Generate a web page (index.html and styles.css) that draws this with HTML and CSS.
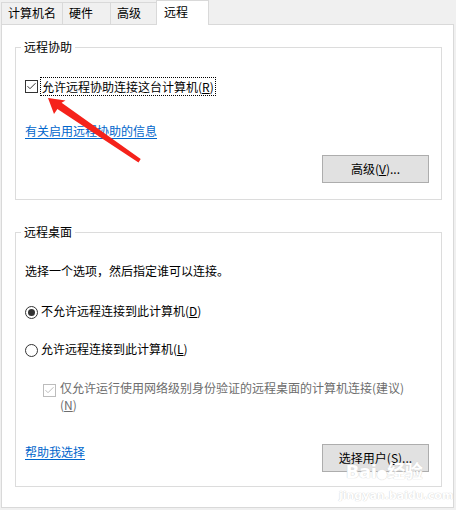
FILE: index.html
```html
<!DOCTYPE html>
<html lang="zh-CN">
<head>
<meta charset="utf-8">
<title>系统属性 - 远程</title>
<link rel="stylesheet" href="styles.css">
</head>
<body>
<div class="tabs">
  <div class="tab t1">计算机名</div>
  <div class="tab t2">硬件</div>
  <div class="tab t3">高级</div>
  <div class="tab active">远程</div>
</div>
<div class="panel">
  <div class="group g1">
    <div class="legend">远程协助</div>
    <div class="check-row">
      <span class="box checked"><svg width="13" height="13" viewBox="0 0 13 13"><rect x="0.5" y="0.5" width="12" height="12" fill="#fff" stroke="#333"/><path d="M2.5 6.2 L5 8.7 L10.5 3.2" fill="none" stroke="#333" stroke-width="1"/></svg></span>
      <span class="focus">允许远程协助连接这台计算机(<u>R</u>)</span>
    </div>
    <a class="link info" href="#">有关启用远程协助的信息</a>
    <button class="btn">高级(<u>V</u>)...</button>
  </div>
  <div class="group g2">
    <div class="legend">远程桌面</div>
    <div class="text intro">选择一个选项，然后指定谁可以连接。</div>
    <div class="radio-row r1">
      <span class="radio"><svg width="13" height="13" viewBox="0 0 13 13"><circle cx="6.5" cy="6.5" r="6" fill="#fff" stroke="#333"/><circle cx="6.5" cy="6.5" r="3.5" fill="#333"/></svg></span>
      <span class="label">不允许远程连接到此计算机(<u>D</u>)</span>
    </div>
    <div class="radio-row r2">
      <span class="radio"><svg width="13" height="13" viewBox="0 0 13 13"><circle cx="6.5" cy="6.5" r="6" fill="#fff" stroke="#333"/></svg></span>
      <span class="label">允许远程连接到此计算机(<u>L</u>)</span>
    </div>
    <div class="sub-row">
      <span class="box disabled"><svg width="13" height="13" viewBox="0 0 13 13"><rect x="0.5" y="0.5" width="12" height="12" fill="#fff" stroke="#bcbcbc"/><path d="M2.5 6.2 L5 8.7 L10.5 3.2" fill="none" stroke="#bcbcbc" stroke-width="1"/></svg></span>
      <span class="sub-label">仅允许运行使用网络级别身份验证的远程桌面的计算机连接(建议)<br>(<u>N</u>)</span>
    </div>
    <div class="bottom-row">
      <a class="link" href="#">帮助我选择</a>
      <button class="btn">选择用户(<u>S</u>)...</button>
    </div>
  </div>
</div>
<svg class="arrow" width="456" height="510" viewBox="0 0 456 510">
  <polygon points="48,98 65.5,100.5 61.6,102.8 140.7,159.1 138.5,162.4 57.4,109 54,114" fill="#f5221b"/>
</svg>
<div class="watermark">
  <div class="wm-logo">Bai<span class="paw">●</span>经验</div>
  <div class="wm-url">jingyan.baidu.com</div>
</div>
</body>
</html>
```

FILE: styles.css
```css
html, body {
  margin: 0;
  padding: 0;
}
body {
  width: 456px;
  height: 510px;
  overflow: hidden;
  background: #f0f0f0;
  font-family: "Noto Sans CJK SC", "Microsoft YaHei", sans-serif;
  font-size: 12px;
  color: #000;
  position: relative;
}
u {
  text-decoration: underline;
  text-underline-offset: 1px;
}
.tabs {
  display: flex;
  align-items: flex-end;
  height: 24px;
  margin-left: 1px;
}
.tab {
  box-sizing: border-box;
  height: 22px;
  border-top: 1px solid #d9d9d9;
  border-left: 1px solid #d9d9d9;
  padding: 2px 0 0 6px;
  line-height: 16px;
  background: #f0f0f0;
  white-space: nowrap;
}
.t1 { width: 61px; }
.t2 { width: 48px; }
.t3 { width: 46px; }
.tab.active {
  position: relative;
  z-index: 1;
  width: 53px;
  height: 25px;
  margin-bottom: -1px;
  border-right: 1px solid #d9d9d9;
  background: #fff;
  padding: 3px 0 0 7px;
}
.panel {
  box-sizing: border-box;
  width: 453px;
  margin-left: 1px;
  border: 1px solid #d9d9d9;
  background: #fff;
  padding: 22px 11px 20px 13px;
}
.group {
  border: 1px solid #dcdcdc;
  display: flex;
  flex-direction: column;
  padding: 0 12px 16px 9px;
}
.g2 {
  margin-top: 32px;
  padding-bottom: 14px;
}
.legend {
  align-self: flex-start;
  margin: -9px 0 0 -4px;
  padding: 0 3px;
  background: #fff;
  line-height: 16px;
}
.check-row {
  display: flex;
  align-items: center;
  margin-top: 22px;
  height: 19px;
}
.box {
  display: block;
  width: 13px;
  height: 13px;
  flex: none;
}
.box svg, .radio svg { display: block; }
.check-row .box { margin-right: 2px; }
.focus {
  border: 1px dotted #000;
  padding: 0 1px;
  line-height: 17px;
}
.link {
  align-self: flex-start;
  color: #0066cc;
  text-decoration: underline;
  text-underline-offset: 2px;
  line-height: 16px;
}
.info { margin-top: 27px; }
.btn {
  box-sizing: border-box;
  width: 107px;
  height: 28px;
  background: #e1e1e1;
  border: 1px solid #adadad;
  border-radius: 0;
  font-family: inherit;
  font-size: 12px;
  color: #000;
  padding: 0;
  line-height: 16px;
}
.g1 .btn {
  align-self: flex-end;
  margin-top: 16px;
}
.intro {
  margin-top: 23px;
  line-height: 16px;
}
.radio-row {
  display: flex;
  align-items: flex-start;
  line-height: 16px;
}
.r1 { margin-top: 24px; }
.r2 { margin-top: 22px; }
.radio {
  display: block;
  width: 13px;
  height: 13px;
  margin: 3px 3px 0 0;
  flex: none;
}
.sub-row {
  display: flex;
  align-items: flex-start;
  margin-top: 22px;
  padding-left: 18px;
}
.sub-row .box {
  margin: 5px 4px 0 0;
}
.sub-label {
  color: #6d6d6d;
  line-height: 17px;
}
.bottom-row {
  display: flex;
  justify-content: space-between;
  align-items: center;
  margin-top: 31px;
}
.arrow {
  position: absolute;
  left: 0;
  top: 0;
  pointer-events: none;
}
.watermark {
  position: absolute;
  left: 339px;
  top: 463px;
  width: 90px;
  text-align: center;
  pointer-events: none;
  color: #fff;
  text-shadow: 0 0 1px #d4d4d4, 0 0 1px #d4d4d4;
  font-family: "DejaVu Sans", "Noto Sans CJK SC", sans-serif;
}
.wm-logo {
  font-size: 18px;
  font-weight: bold;
  line-height: 18px;
  letter-spacing: -0.5px;
}
.paw {
  font-size: 13px;
}
.wm-url {
  font-size: 11px;
  line-height: 13px;
  margin-top: 6px;
  font-weight: bold;
}
```
